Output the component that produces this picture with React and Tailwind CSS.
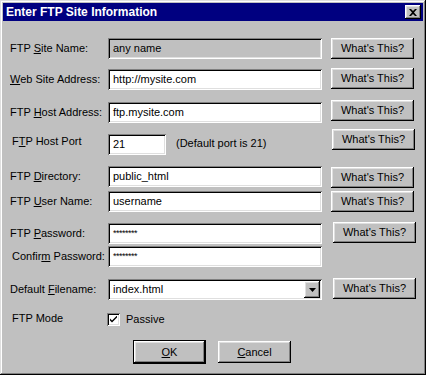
import React from 'react';

const raised = "shadow-[inset_-1px_-1px_#000,inset_1px_1px_#fff,inset_-2px_-2px_#808080,inset_2px_2px_#dfdfdf]";
const sunken = "shadow-[inset_1px_1px_#808080,inset_-1px_-1px_#fff,inset_2px_2px_#000,inset_-2px_-2px_#dfdfdf]";

const Label = ({ children, extra = "" }) => (
  <div className={`w-[98px] h-[21px] flex items-center shrink-0 whitespace-pre ${extra}`}>
    <span>{children}</span>
  </div>
);

const Field = ({ children, w = "w-[214px]", bg = "bg-white" }) => (
  <div className={`${w} h-[21px] ${bg} ${sunken} flex items-center pl-[5px] shrink-0 whitespace-nowrap`}>{children}</div>
);

const WhatsThis = ({ extra = "ml-[9px]" }) => (
  <button className={`w-[83px] h-[21px] bg-[#c0c0c0] ${raised} flex items-center justify-center shrink-0 ${extra}`}>
    What's This?
  </button>
);

export default function App() {
  return (
    <div
      className={`w-[426px] h-[375px] bg-[#c0c0c0] p-[3px] text-[11px] text-black shadow-[inset_-1px_-1px_#000,inset_1px_1px_#dfdfdf,inset_-2px_-2px_#808080,inset_2px_2px_#fff]`}
      style={{ fontFamily: '"Liberation Sans", Arial, sans-serif' }}
    >
      {/* title bar */}
      <div className="h-[18px] bg-[#000080] flex items-center justify-between pl-[3px] pr-[2px]">
        <span className="text-white font-bold text-[12px] leading-none">Enter FTP Site Information</span>
        <div className={`w-[16px] h-[14px] bg-[#c0c0c0] ${raised} flex items-center justify-center`}>
          <svg width="8" height="7" viewBox="0 0 8 7">
            <path d="M0 0h2l2 2 2-2h2L5 3.5 8 7H6L4 5 2 7H0l3-3.5z" fill="#000" />
          </svg>
        </div>
      </div>

      <div className="pl-[7px]">
        {/* Site name */}
        <div className="flex items-start mt-[17px]">
          <Label>FTP <u>S</u>ite Name:</Label>
          <Field bg="bg-[#c0c0c0]">any name</Field>
          <WhatsThis />
        </div>

        {/* Web site */}
        <div className="flex items-start mt-[10px]">
          <Label><u>W</u>eb Site Address:</Label>
          <Field>http://mysite.com</Field>
          <WhatsThis extra="ml-[9px] -mt-[1px]" />
        </div>

        {/* host address */}
        <div className="flex items-start mt-[12px]">
          <Label>FTP <u>H</u>ost Address:</Label>
          <Field>ftp.mysite.com</Field>
          <WhatsThis extra="ml-[9px] -mt-[2px]" />
        </div>

        {/* port */}
        <div className="flex items-start mt-[11px]">
          <Label extra="pl-[2px] pb-[6px]">F<u>T</u>P Host Port</Label>
          <Field w="w-[58px]">21</Field>
          <div className="h-[21px] flex items-center pb-[2px] ml-[10px] w-[147px] shrink-0">(Default port is 21)</div>
          <WhatsThis extra="ml-[9px] -mt-[5px]" />
        </div>

        {/* directory */}
        <div className="flex items-start mt-[11px]">
          <Label>FTP <u>D</u>irectory:</Label>
          <Field>public_html</Field>
          <WhatsThis extra="ml-[9px] mt-[1px]" />
        </div>

        {/* user */}
        <div className="flex items-start mt-[3px]">
          <Label>FTP <u>U</u>ser Name:</Label>
          <Field>username</Field>
          <WhatsThis />
        </div>

        {/* password */}
        <div className="flex items-start mt-[11px]">
          <Label>FTP <u>P</u>assword:</Label>
          <Field>
            <span className="text-[9px] tracking-[-0.5px]">********</span>
          </Field>
          <WhatsThis extra="ml-[11px] -mt-[1px]" />
        </div>

        {/* confirm */}
        <div className="flex items-start mt-[2px]">
          <Label extra="pl-[2px]">Confir<u>m</u> Password:</Label>
          <Field>
            <span className="text-[9px] tracking-[-0.5px]">********</span>
          </Field>
        </div>

        {/* filename */}
        <div className="flex items-start mt-[12px]">
          <Label>Default <u>F</u>ilename:</Label>
          <div className={`w-[214px] h-[21px] bg-white ${sunken} flex items-center justify-between pl-[5px] pr-[2px] shrink-0`}>
            <span>index.html</span>
            <div className={`w-[16px] h-[17px] bg-[#c0c0c0] ${raised} flex items-center justify-center`}>
              <svg width="7" height="4" viewBox="0 0 7 4">
                <path d="M0 0h7L3.5 4z" fill="#000" />
              </svg>
            </div>
          </div>
          <WhatsThis extra="ml-[11px] -mt-[1px]" />
        </div>

        {/* ftp mode */}
        <div className="flex items-center mt-[9px] h-[21px]">
          <Label extra="pl-[2px] pb-[2px]">FTP Mode</Label>
          <div className={`w-[13px] h-[13px] bg-white ${sunken} flex items-center justify-center -ml-[1px]`}>
            <svg width="7" height="7" viewBox="0 0 7 7">
              <path d="M0 2.5v2l2 2 5-5v-2l-5 5z" fill="#000" />
            </svg>
          </div>
          <span className="ml-[6px]">Passive</span>
        </div>
      </div>

      {/* buttons */}
      <div className="flex justify-center gap-[12px] mt-[10px] pr-[2px]">
        <div className="border border-black h-[24px]">
          <button className={`w-[71px] h-[22px] bg-[#c0c0c0] ${raised} flex items-center justify-center`}>
            <span><u>O</u>K</span>
          </button>
        </div>
        <button className={`w-[73px] h-[22px] mt-[1px] bg-[#c0c0c0] ${raised} flex items-center justify-center`}>
          <span><u>C</u>ancel</span>
        </button>
      </div>
    </div>
  );
}
